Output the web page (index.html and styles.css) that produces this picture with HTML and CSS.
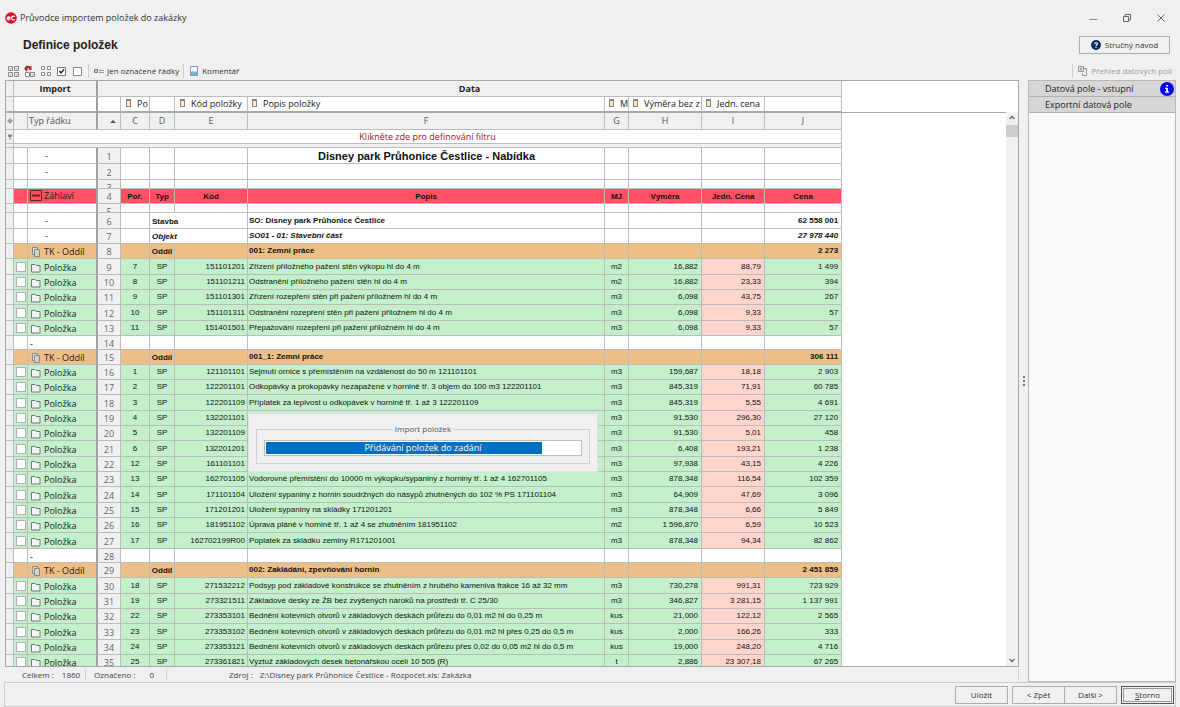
FILE: index.html
```html
<!DOCTYPE html>
<html lang="cs">
<head>
<meta charset="utf-8">
<title>Průvodce importem položek do zakázky</title>
<link rel="stylesheet" href="styles.css">
</head>
<body>
<div class="window">
  <header class="titlebar">
    <svg class="logo" viewBox="0 0 12 12" width="12" height="12" aria-hidden="true"><circle cx="6" cy="6" r="5.8" fill="#d8102f"/><path d="M2.2 6.1h2.9M5.2 6.2C5.1 4.3 2.2 4.300 2.200 6.200C2.200 8 4.300 8.200 5.100 7.400M9.800 4.500C8.300 3.500 6.500 4.600 6.500 6.100C6.500 7.700 8.300 8.500 9.800 7.600" fill="none" stroke="#fff" stroke-width="1.200"/></svg>
    <span class="title">Průvodce importem položek do zakázky</span>
    <div class="winbuttons">
      <button type="button" aria-label="Minimalizovat"><svg viewBox="0 0 10 10" width="10" height="10"><path d="M1.500 6.500h8" stroke="#888"/></svg></button>
      <button type="button" aria-label="Obnovit"><svg viewBox="0 0 10 10" width="10" height="10"><path d="M1.500 3.500h5v5h-5zM3 3.500V1.500h5.500V7H7" fill="none" stroke="#666"/></svg></button>
      <button type="button" aria-label="Zavřít"><svg viewBox="0 0 10 10" width="10" height="10"><path d="M1.500 1.500l7 7M8.500 1.500l-7 7" stroke="#666"/></svg></button>
    </div>
  </header>
  <div class="heading">
    <h1>Definice položek</h1>
    <button type="button" class="btn help"><svg viewBox="0 0 10 10" width="10" height="10" aria-hidden="true"><circle cx="5" cy="5" r="4.900" fill="#0b2a5c"/><path d="M3.600 4C3.600 2.200 6.500 2.300 6.400 3.900C6.400 4.800 5 4.800 5 6M5 6.800v1.100" fill="none" stroke="#fff" stroke-width="1.100"/></svg>Stručný návod</button>
  </div>
  <div class="toolbar">
    <button type="button" class="tool" aria-label="Označit vše"><svg viewBox="0 0 12 12" width="12" height="12"><path d="M.5 1.500h4v4h-4zM6.500 1.500h4v4h-4zM.5 7.500h4v4h-4zM6.500 7.500h4v4h-4z" fill="#fff" stroke="#888"/><path d="M1.500 3.500l1 1 1.200-2M7.500 3.500l1 1 1.200-2M1.500 9.500l1 1 1.200-2M7.500 9.500l1 1 1.200-2" fill="none" stroke="#888" stroke-width=".8"/></svg></button>
    <button type="button" class="tool" aria-label="Obrátit označení"><svg viewBox="0 0 12 12" width="12" height="12"><path d="M1.500 7.500h4v4h-4zM6.500 7.500h4v4h-4z" fill="#fff" stroke="#888"/><path d="M7.500 9.500l1 1 1.200-2" fill="none" stroke="#888" stroke-width=".8"/><path d="M2 4.500C1.500 1.500 4 1 6.500 2.500" fill="none" stroke="#b7222c" stroke-width="2"/><path d="M7.500 .5v4.500L4 4.500zM0 3h4L2.500 7z" fill="#b7222c"/></svg></button>
    <button type="button" class="tool" aria-label="Zrušit označení"><svg viewBox="0 0 12 12" width="12" height="12"><path d="M1.500 1.500h3v3h-3zM7.500 1.500h3v3h-3zM1.500 7.500h3v3h-3zM7.500 7.500h3v3h-3z" fill="#fff" stroke="#888"/></svg></button>
    <button type="button" class="tool" aria-label="Označit řádky"><svg viewBox="0 0 12 12" width="12" height="12"><path d="M1.500 2.500h8v8h-8z" fill="#fff" stroke="#777"/><path d="M3.500 6l1.500 2 3-3.500" fill="none" stroke="#222" stroke-width="1.400"/></svg></button>
    <button type="button" class="tool" aria-label="Odznačit řádky"><svg viewBox="0 0 12 12" width="12" height="12"><path d="M1.500 2.500h8v8h-8z" fill="#fff" stroke="#888"/></svg></button>
    <span class="sep"></span>
    <button type="button" class="tool text"><svg viewBox="0 0 12 12" width="12" height="12" aria-hidden="true"><path d="M1.500 4.500h3v3h-3z" fill="#f3c3c3" stroke="#777"/><path d="M6 5.500h5M6 7.500h5" stroke="#999"/></svg>Jen označené řádky</button>
    <span class="sep"></span>
    <button type="button" class="tool text"><svg viewBox="0 0 12 12" width="12" height="12" aria-hidden="true"><path d="M2.500 1.500h7v9h-7z" fill="#f7fbff" stroke="#8b98a5"/><path d="M3 7l2-1 2 1 2-1v4H3z" fill="#6db6ea"/></svg>Komentář</button>
    <span class="spacer"></span>
    <span class="sep"></span>
    <button type="button" class="tool text" disabled><svg viewBox="0 0 12 12" width="12" height="12" aria-hidden="true"><path d="M7 3.500h2.500v7h-4V8" fill="none" stroke="#999"/><path d="M1.500 1.500h5v5h-5zM3 3.500h2M3 5h2" fill="#e6e6e6" stroke="#999"/></svg>Přehled datových polí</button>
  </div>
  <main class="main">
    <section class="left">
      <div class="grid">
        <div class="sheet">
          <table>
            <colgroup><col class="w-ind"><col class="w-chk"><col class="w-type"><col class="w-num"><col class="w-c"><col class="w-d"><col class="w-e"><col class="w-f"><col class="w-g"><col class="w-h"><col class="w-i"><col class="w-j"></colgroup>
            <thead>
              <tr class="bands"><th></th><th colspan="2" class="thick">Import</th><th colspan="9">Data</th></tr>
              <tr class="fields"><th></th><th colspan="2" class="thick"></th><th></th>
                <th><i class="tag"></i>Po</th><th></th><th><i class="tag"></i>Kód položky</th><th class="near"><i class="tag"></i>Popis položky</th><th class="near"><i class="tag"></i>M</th><th class="near"><i class="tag"></i>Výměra bez z</th><th class="near"><i class="tag"></i>Jedn. cena</th><th></th></tr>
              <tr class="letters"><th><svg viewBox="0 0 6 6" width="6" height="6"><circle cx="3" cy="3" r="2" fill="#999"/><path d="M3 0v6M0 3h6" stroke="#999"/></svg></th><th></th><th class="thick kind">Typ řádku</th><th><svg class="sort" viewBox="0 0 6 3" width="6" height="3"><path d="M0 3L3 0l3 3z" fill="#555"/></svg></th><th>C</th><th>D</th><th>E</th><th>F</th><th>G</th><th>H</th><th>I</th><th>J</th></tr>
              <tr class="filter"><th><svg viewBox="0 0 6 6" width="6" height="6"><path d="M1 .5h4v2L3.500 3.500V6h-1V3.500L1 2.500z" fill="#888"/></svg></th><th colspan="11">Klikněte zde pro definování filtru</th></tr>
              <tr class="gap"><th></th><th colspan="11"></th></tr>
            </thead>
            <tbody id="rows"></tbody>
          </table>
        </div>
        <div class="scrollbar" aria-hidden="true">
          <svg viewBox="0 0 8 8" width="8" height="8"><path d="M1.500 5L4 2.500 6.500 5" fill="none" stroke="#666" stroke-width="1.300"/></svg>
          <span class="thumb"></span>
          <svg viewBox="0 0 8 8" width="8" height="8"><path d="M1.500 3L4 5.500 6.500 3" fill="none" stroke="#666" stroke-width="1.300"/></svg>
        </div>
        <div class="dialog" role="dialog" aria-label="Import položek">
          <fieldset>
            <legend>Import položek</legend>
            <div class="progress" role="progressbar" aria-valuenow="88" aria-valuemin="0" aria-valuemax="100">
              <div class="bar" style="width:88%"></div><span>Přidávání položek do zadání</span>
            </div>
          </fieldset>
        </div>
      </div>
      <div class="status"><span class="total">Celkem :<b>1860</b></span><span class="marked">Označeno :<b>0</b></span><span class="source">Zdroj :<b>Z:\Disney park Průhonice Čestlice - Rozpočet.xls: Zakázka</b></span></div>
    </section>
    <div class="splitter"><i></i><i></i><i></i></div>
    <aside class="side">
      <button type="button" class="group">Datová pole - vstupní</button>
      <button type="button" class="group">Exportní datová pole</button>
      <svg class="info" viewBox="0 0 14 14" width="14" height="14" aria-label="Informace"><circle cx="7" cy="7" r="7" fill="#0505ee"/><path d="M6.200 3h1.700v1.500H6.200zM5.300 5.800h2.600v3.700h1.200v1.200H5V9.500h1.200V7h-.9z" fill="#fff"/></svg>
    </aside>
  </main>
  <footer class="actions">
    <button type="button" class="btn">Uložit</button>
    <div class="pair"><button type="button" class="btn">&lt; Zpět</button><button type="button" class="btn">Další &gt;</button></div>
    <button type="button" class="btn cancel"><span><u>S</u>torno</span></button>
  </footer>
</div>
<script src="rows.js"></script>
</body>
</html>
```
FILE: rows.js
```js
// kind | number | order | type | code | description | unit | amount | unit price | price
const data = `
title|1||||Disney park Průhonice Čestlice - Nabídka
plain|2
thin|3
head|4|Poř.|Typ|Kód|Popis|MJ|Výměra|Jedn. Cena|Cena
thin|5
build|6||Stavba||SO: Disney park Průhonice Čestlice||||62 558 001
object|7||Objekt||SO01 - 01: Stavební část||||27 978 440
section|8||Oddíl||001: Zemní práce||||2 273
item|9|7|SP|151101201|Zřízení příložného pažení stěn výkopu hl do 4 m|m2|16,882|88,79|1 499
item|10|8|SP|151101211|Odstranění příložného pažení stěn hl do 4 m|m2|16,882|23,33|394
item|11|9|SP|151101301|Zřízení rozepření stěn při pažení příložném hl do 4 m|m3|6,098|43,75|267
item|12|10|SP|151101311|Odstranění rozepření stěn při pažení příložném hl do 4 m|m3|6,098|9,33|57
item|13|11|SP|151401501|Přepažování rozepření při pažení příložném hl do 4 m|m3|6,098|9,33|57
blank|14
section|15||Oddíl||001_1: Zemní práce||||306 111
item|16|1|SP|121101101|Sejmutí ornice s přemístěním na vzdálenost do 50 m 121101101|m3|159,687|18,18|2 903
item|17|2|SP|122201101|Odkopávky a prokopávky nezapažené v hornině tř. 3 objem do 100 m3 122201101|m3|845,319|71,91|60 785
item|18|3|SP|122201109|Příplatek za lepivost u odkopávek v hornině tř. 1 až 3 122201109|m3|845,319|5,55|4 691
item|19|4|SP|132201101||m3|91,530|296,30|27 120
item|20|5|SP|132201109||m3|91,530|5,01|458
item|21|6|SP|132201201||m3|6,408|193,21|1 238
item|22|12|SP|161101101||m3|97,938|43,15|4 226
item|23|13|SP|162701105|Vodorovné přemístění do 10000 m výkopku/sypaniny z horniny tř. 1 až 4 162701105|m3|878,348|116,54|102 359
item|24|14|SP|171101104|Uložení sypaniny z hornin soudržných do násypů zhutněných do 102 % PS 171101104|m3|64,909|47,69|3 096
item|25|15|SP|171201201|Uložení sypaniny na skládky 171201201|m3|878,348|6,66|5 849
item|26|16|SP|181951102|Úprava pláně v hornině tř. 1 až 4 se zhutněním 181951102|m2|1 596,870|6,59|10 523
item|27|17|SP|162702199R00|Poplatek za skládku zeminy R171201001|m3|878,348|94,34|82 862
blank|28
section|29||Oddíl||002: Zakládání, zpevňování hornin||||2 451 859
item|30|18|SP|271532212|Podsyp pod základové konstrukce se zhutněním z hrubého kameniva frakce 16 až 32 mm|m3|730,278|991,31|723 929
item|31|19|SP|273321511|Základové desky ze ŽB bez zvýšených nároků na prostředí tř. C 25/30|m3|346,827|3 281,15|1 137 991
item|32|22|SP|273353101|Bednění kotevních otvorů v základových deskách průřezu do 0,01 m2 hl do 0,25 m|kus|21,000|122,12|2 565
item|33|23|SP|273353102|Bednění kotevních otvorů v základových deskách průřezu do 0,01 m2 hl přes 0,25 do 0,5 m|kus|2,000|166,26|333
item|34|24|SP|273353121|Bednění kotevních otvorů v základových deskách průřezu přes 0,02 do 0,05 m2 hl do 0,5 m|kus|19,000|248,20|4 716
item|35|25|SP|273361821|Výztuž základových desek betonářskou ocelí 10 505 (R)|t|2,886|23 307,18|67 265
`.trim().split("\n").map(line => line.split("|"));

const folder = '<svg viewBox="0 0 10 10" width="10" height="10"><path d="M.5 1.500h3.500l1 1h4v6.500H.5z" fill="#f4f4f4" stroke="#777"/></svg>';
const pages = '<svg viewBox="0 0 10 10" width="10" height="10"><path d="M1.500 .5h5v7h-5z" fill="#ddd" stroke="#888"/><path d="M3.500 2.500h5v7h-5z" fill="#cfd3d6" stroke="#888"/></svg>';
const minus = '<svg viewBox="0 0 12 12" width="12" height="12"><path d="M.5 .5h11v10H.5z" fill="none" stroke="#70202b"/><path d="M2 5.500h8" stroke="#70202b" stroke-width="2"/></svg>';
const label = {
  title: "-", plain: "-", build: "-", object: "-", thin: "", blank: "-",
  head: minus + "Záhlaví", section: pages + "TK - Oddíl", item: folder + "Položka"
};

document.getElementById("rows").innerHTML = data.map(([kind, num, ...cells]) => {
  const box = kind === "item" ? `<input type="checkbox" aria-label="Označit řádek ${num}">` : "";
  const names = ["c", "d", "e", "f", "g", "h", "i", "j"];
  const joined = kind === "build" || kind === "object";
  const tds = names.map((n, i) => joined && n === "e" ? "" :
    `<td class="${n}"${joined && n === "d" ? ' colspan="2"' : ""}>${cells[i] || ""}</td>`).join("");
  return `<tr class="${kind}"><td class="ind"></td><td class="chk">${box}</td><td class="kind thick"><div>${label[kind]}</div></td><td class="num"><div>${num}</div></td>${tds}</tr>`;
}).join("");
```
FILE: styles.css
```css
* { box-sizing: border-box; }
html, body { height: 100%; margin: 0; }
body { background: #f0f0f0; color: #333; font: 9px/12px "Open Sans", "Noto Sans", sans-serif; overflow: hidden; }
button { font: inherit; color: inherit; background: none; border: 0; padding: 0; }
svg { display: block; flex: none; }
.window { height: 100%; display: flex; flex-direction: column; }

.titlebar { height: 34px; display: flex; align-items: center; padding: 2px 14px 0 5px; gap: 3px; }
.winbuttons { margin-left: auto; display: flex; gap: 24px; }
.heading { height: 28px; display: flex; align-items: center; justify-content: space-between; padding: 0 10px 6px 23px; }
h1 { margin: 0; font: bold 12px/16px "Liberation Sans", Arial, sans-serif; color: #222; }
.btn { height: 18px; min-width: 53px; border: 1px solid #adadad; background: #f0f0f0; display: flex; align-items: center; justify-content: center; font-size: 8px; }
.help { width: 91px; gap: 4px; }
.toolbar { height: 18px; display: flex; align-items: center; padding: 0 8px 0 8px; gap: 4px; }
.tool { display: flex; align-items: center; gap: 2px; font-size: 8px; }
.tool:disabled { color: #999; }
.sep { width: 1px; height: 14px; background: #d0d0d0; }
.spacer { flex: 1; }

.main { flex: 1; min-height: 0; display: flex; padding: 0 4px 0 5px; }
.left { flex: 1; min-width: 0; display: flex; flex-direction: column; }
.grid { position: relative; flex: 1; min-height: 0; border: 1px solid #a8a8a8; background: #fff; display: flex; }
.sheet { flex: 1; min-width: 0; overflow: hidden; background: linear-gradient(#a8a8a8, #a8a8a8) 0 31px / 100% 1px no-repeat; }
table { table-layout: fixed; width: 836px; border-collapse: separate; border-spacing: 0; }
.w-ind { width: 8px; } .w-chk { width: 14px; } .w-type { width: 70px; } .w-num { width: 23px; }
.w-c { width: 29px; } .w-d { width: 25px; } .w-e { width: 73px; } .w-f { width: 357px; }
.w-g { width: 24px; } .w-h { width: 73px; } .w-i { width: 63px; } .w-j { width: 77px; }
th, td { padding: 0; border-right: 1px solid #bcbcbc; border-bottom: 1px solid #bcbcbc; overflow: hidden; white-space: nowrap; line-height: 12px; }
th { font-weight: normal; text-align: center; background: #f0f0f0; }
.thick { border-right: 2px solid #a0a0a0; }
th svg { margin: 0 auto; }
th .sort { margin: 0 4px 0 auto; }
.bands th { height: 16px; font-weight: bold; color: #222; }
.fields th { height: 16px; background: #fff; border-bottom: 2px solid #a8a8a8; text-align: left; color: #222; padding-left: 5px; }
.fields th:first-child { background: #f0f0f0; padding: 0; }
.fields .near { padding-left: 4px; }
.tag { display: inline-block; width: 5px; height: 8px; border: 1px solid #8a8577; border-top-width: 2px; background: #fbe9c8; margin-right: 6px; }
.letters th { height: 17px; color: #555; }
.letters .kind { text-align: left; padding-left: 1px; }
.filter th { height: 14px; background: #fff; color: #a5121f; }
.filter th:first-child, .gap th { background: #f0f0f0; }
.gap th { height: 4px; }

td { height: 15px; font: 8px/12px "Liberation Sans", Arial, sans-serif; color: #111; }
.item:nth-child(3n) td, .plain td, .build td { height: 16px; }
.blank td { height: 14px; }
.thin td { height: 9px; }
.kind div, .num div { font: 9px/12px "Open Sans", "Noto Sans", sans-serif; display: flex; align-items: center; height: 14px; }
.kind div { gap: 3px; padding: 2px 0 0 3px; color: #222; }
.num { background: #f0f0f0; }
.num div { justify-content: center; color: #666; padding-top: 2px; }
.title .kind div, .plain .kind div, .build .kind div, .object .kind div { padding: 0 0 0 17px; }
.blank .kind div { padding-left: 2px; }
.blank .kind div, .blank .num div { height: 13px; }
.thin .kind div, .thin .num div { height: 8px; overflow: hidden; align-items: flex-start; padding-top: 2px; }
.ind { background: #f0f0f0; }
.chk input { appearance: none; display: block; width: 10px; height: 10px; margin: 0 auto; background: #fff; border: 1px solid #b0b0b0; }
.c, .d, .g { text-align: center; }
.e, .h, .i, .j { text-align: right; }
.e { padding-right: 2px; }
.f { padding-left: 1px; }
.h, .i, .j { padding-right: 3px; }
.title td { height: 16px; }
.title .f { text-align: center; font-weight: bold; font-size: 11px; }
.head td { font-weight: bold; text-align: center; padding: 0; }
.head td:not(.num):not(.ind) { background: #ff5064; }
.head .c, .head .d, .head .e, .head .f, .head .g, .head .h, .head .i, .head .j { padding-top: 2px; }
.head .kind div { padding: 0 0 0 2px; gap: 2px; }
.section td:not(.num):not(.ind) { background: #eebe87; }
.section .d, .build .d, .object .d { padding-top: 2px; }
.item td:not(.num):not(.ind) { background: #c3efca; }
.item td.i:not(.num) { background: #ffd5cb; }
.section td, .build td, .object td { font-weight: bold; }
.object td { font-style: italic; }
.build .d, .object .d { text-align: left; padding-left: 2px; }

.scrollbar { width: 12px; margin-top: 31px; background: #f0f0f0; display: flex; flex-direction: column; align-items: center; padding: 2px 0; }
.scrollbar svg:last-child { margin-top: auto; }
.thumb { width: 12px; height: 12px; background: #cdcdcd; margin-top: 3px; }

.dialog { position: absolute; left: 242px; top: 332px; width: 350px; height: 59px; background: #f0f0f0; border: 1px solid #e2e2e2; padding: 9px 7px; }
fieldset { margin: 0; height: 41px; padding: 5px 7px; border: 1px solid #d0d0d0; min-width: 0; }
legend { margin: 0 auto; padding: 0 2px; line-height: 12px; font-size: 8px; color: #555; }
.progress { position: relative; height: 16px; border: 1px solid #bcbcbc; background: #fff; padding: 1px; }
.bar { height: 100%; background: #0070c4; }
.progress span { position: absolute; inset: 0; text-align: center; line-height: 14px; color: #fff; }

.status { height: 15px; display: flex; align-items: center; color: #444; font-size: 8px; white-space: nowrap; }
.status span { height: 12px; line-height: 12px; border-right: 1px solid #d0d0d0; }
.status b { font-weight: normal; }
.total { width: 81px; padding-left: 17px; } .total b { margin-left: 8px; }
.marked { width: 81px; padding-left: 8px; } .marked b { margin-left: 14px; }
.source { flex: 1; padding-left: 62px; } .source b { margin-left: 7px; }

.splitter { width: 9px; display: flex; flex-direction: column; align-items: center; justify-content: center; gap: 2px; }
.splitter i { width: 2px; height: 2px; background: #777; }
.side { position: relative; width: 148px; border: 1px solid #b8b8b8; background: #f9f9f9; display: flex; flex-direction: column; }
.group { height: 16px; flex: none; background: #d6d6d6; border-bottom: 1px solid #b0b0b0; text-align: left; padding-left: 16px; color: #222; }
.info { position: absolute; right: 1px; top: 1px; }

.actions { height: 25px; margin: 0 4px; border: 1px solid #ccc; display: flex; align-items: center; justify-content: flex-end; gap: 4px; padding-right: 1px; }
.pair { display: flex; }
.pair .btn + .btn { margin-left: -1px; }
.cancel { border-color: #555; padding: 1px; }
.cancel span { flex: 1; align-self: stretch; border: 1px solid #999; line-height: 12px; }
```
